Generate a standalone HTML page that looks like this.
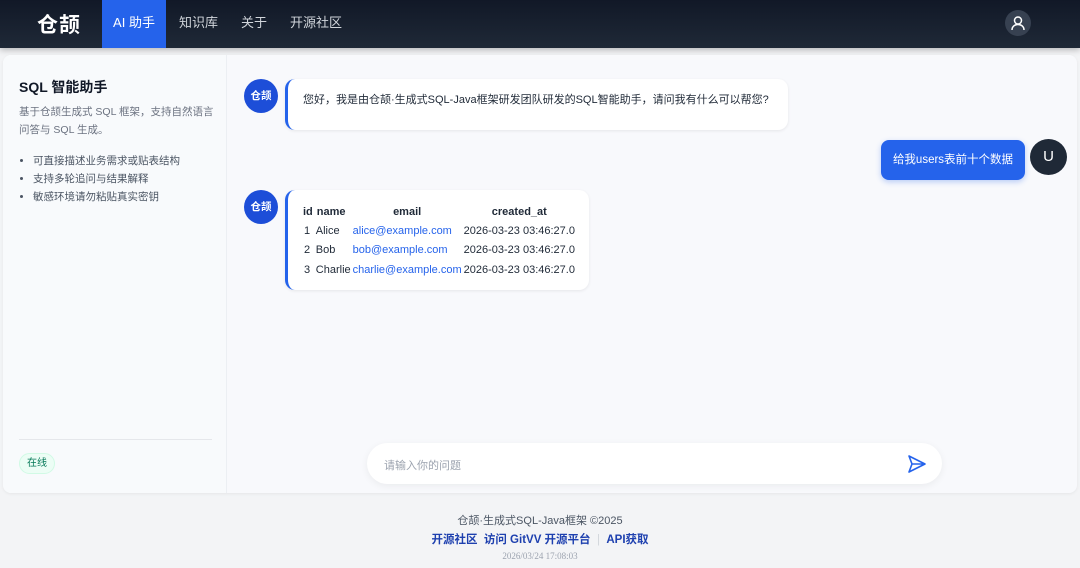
<!DOCTYPE html>
<html><head><meta charset="utf-8"><style>
*{margin:0;padding:0;box-sizing:border-box}
body{width:1080px;height:568px;overflow:hidden;background:#f3f4f6;font-family:"Liberation Sans","Noto Sans CJK SC",sans-serif;position:relative}
.hdr{position:absolute;left:0;top:0;width:1080px;height:48px;background:linear-gradient(#111827,#1f2937);box-shadow:0 2px 6px rgba(0,0,0,.25)}
.logo{position:absolute;left:37px;top:9px;color:#fff;font-size:21px;font-weight:bold;letter-spacing:1px}
.nav{position:absolute;top:0;height:48px;line-height:46px;color:#d1d5db;font-size:13px}
.nav.on{background:#2563eb;color:#fff;left:102px;width:64px;text-align:center}
.usr{position:absolute;left:1005px;top:10px;width:26px;height:26px;border-radius:50%;background:#374151}
.card{position:absolute;left:3px;top:55px;width:1074px;height:438px;border-radius:8px;background:#f8f9fc;overflow:hidden;box-shadow:0 1px 3px rgba(0,0,0,.06)}
.side{position:absolute;left:0;top:0;width:224px;height:438px;background:#f8fafc;border-right:1px solid #eceff3}
.side h3{position:absolute;left:16px;top:22px;font-size:14px;color:#111827}
.side .d{position:absolute;left:16px;top:48px;width:200px;font-size:10.5px;line-height:18px;color:#6b7280}
.side ul{position:absolute;left:30px;top:97px;font-size:10.5px;line-height:18px;color:#4b5563}
.hr{position:absolute;left:16px;top:384px;width:193px;border-top:1px solid #e5e7eb}
.tag{position:absolute;left:16px;top:398px;width:36px;height:21px;border-radius:11px;background:#ecfdf5;border:1px solid #d1fae5;color:#047857;font-size:10px;text-align:center;line-height:19px}
.av{position:absolute;width:34px;height:34px;border-radius:50%;background:#1d4ed8;color:#fff;font-size:10.5px;font-weight:bold;text-align:center;line-height:34px}
.b{position:absolute;background:#fff;border-left:3px solid #2563eb;border-radius:10px;box-shadow:0 1px 3px rgba(0,0,0,.08);font-size:11.5px;color:#1f2937}
.ub{position:absolute;left:881px;top:140px;width:144px;height:40px;border-radius:8px;background:#2563eb;color:#fff;font-size:11.5px;line-height:40px;text-align:center;box-shadow:0 2px 6px rgba(37,99,235,.3)}
.u{position:absolute;left:1030px;top:139px;width:37px;height:36px;border-radius:50%;background:#1f2937;color:#fff;font-size:15px;text-align:center;line-height:36px}
table{border-collapse:collapse;font-size:11px;color:#1f2937}
th{font-weight:bold;padding:0 2px;height:19px}
td{padding:0 1px;height:19.5px;white-space:nowrap}
td a{color:#2563eb;text-decoration:none}
.inp{position:absolute;left:367px;top:443px;width:575px;height:41px;border-radius:21px;background:#fff;box-shadow:0 2px 8px rgba(0,0,0,.06)}
.ft{position:absolute;left:0;width:1080px;text-align:center}
</style></head><body>
<div class="hdr">
<div class="logo">仓颉</div>
<div class="nav on">AI 助手</div>
<div class="nav" style="left:179px">知识库</div>
<div class="nav" style="left:241px">关于</div>
<div class="nav" style="left:290px">开源社区</div>
<div class="usr"><svg width="26" height="26" viewBox="0 0 26 26" fill="none" stroke="#fff" stroke-width="1.5"><circle cx="13" cy="10.5" r="3.5"/><path d="M7 20c0-3.5 2.7-5.5 6-5.5s6 2 6 5.5"/></svg></div>
</div>
<div class="card">
<div class="side">
<h3>SQL 智能助手</h3>
<div class="d">基于仓颉生成式 SQL 框架，支持自然语言问答与 SQL 生成。</div>
<ul><li>可直接描述业务需求或贴表结构</li><li>支持多轮追问与结果解释</li><li>敏感环境请勿粘贴真实密钥</li></ul>
<div class="hr"></div>
<div class="tag">在线</div>
</div>
</div>
<div class="av" style="left:244px;top:79px">仓颉</div>
<div class="b" style="left:285px;top:79px;width:503px;height:51px;padding:12px 0 0 15px;white-space:nowrap;font-size:11px">您好，我是由仓颉·生成式SQL-Java框架研发团队研发的SQL智能助手，请问我有什么可以帮您?</div>
<div class="ub">给我users表前十个数据</div>
<div class="u">U</div>
<div class="av" style="left:244px;top:190px">仓颉</div>
<div class="b" style="left:285px;top:190px;width:304px;height:100px;padding:12px 0 0 15px">
<table><tr><th style="padding-left:0">id</th><th style="text-align:left">name</th><th>email</th><th>created_at</th></tr>
<tr><td>1</td><td>Alice</td><td><a>alice@example.com</a></td><td>2026-03-23 03:46:27.0</td></tr>
<tr><td>2</td><td>Bob</td><td><a>bob@example.com</a></td><td>2026-03-23 03:46:27.0</td></tr>
<tr><td>3</td><td>Charlie</td><td><a>charlie@example.com</a></td><td>2026-03-23 03:46:27.0</td></tr></table>
</div>
<div class="inp"><span style="position:absolute;left:17px;top:14px;font-size:11px;color:#9ca3af">请输入你的问题</span>
<svg style="position:absolute;left:540px;top:11px" width="20" height="20" viewBox="0 0 20 20" fill="none" stroke="#2563eb" stroke-width="1.6" stroke-linejoin="round"><path d="M2 2l16 8-16 8 3-8z M5 10h13"/></svg></div>
<div class="ft" style="top:512px;font-size:11px;color:#4b5563">仓颉·生成式SQL-Java框架 ©2025</div>
<div class="ft" style="top:531px;font-size:11.5px;color:#1e40af;font-weight:bold">开源社区&nbsp; 访问 GitVV 开源平台 &nbsp;<span style="color:#d1d5db;font-weight:normal">|</span>&nbsp; API获取</div>
<div class="ft" style="top:551px;font-size:9px;color:#9ca3af;font-family:'Liberation Serif',serif">2026/03/24 17:08:03</div>
</body></html>
